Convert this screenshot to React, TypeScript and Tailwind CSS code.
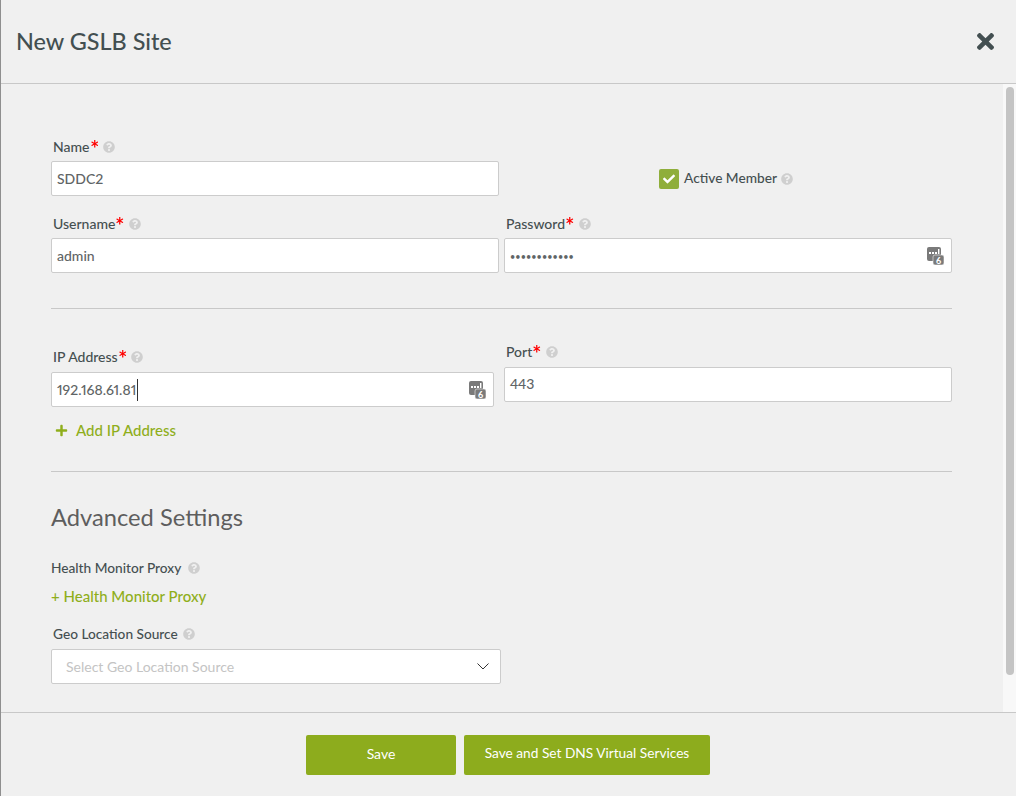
import React from "react";
import { FaQuestionCircle, FaTimes, FaPlus, FaCheck, FaAsterisk } from "react-icons/fa";

function Help({ className = "" }: { className?: string }) {
  return <FaQuestionCircle className={`text-[#cfcfcf] w-3 h-3 shrink-0 ${className}`} />;
}

function Label({ text }: { text: string }) {
  return (
    <div className="flex items-center h-[20px] pb-[2px] text-[14px] text-[#454f50] font-medium pl-[2px]">
      <span>{text}</span>
      <FaAsterisk className="text-[#ff0000] w-[7.5px] h-[7.5px] -mt-[4px] ml-[1px] shrink-0" />
      <Help className="ml-[5px] mt-[2px]" />
    </div>
  );
}

function SecretIcon() {
  return (
    <svg viewBox="0 0 17 18" className="w-[17px] h-[18px] shrink-0">
      <rect x="0" y="0" width="14" height="14" rx="2" fill="#7a7a7a" />
      <rect x="2" y="5" width="2" height="2" fill="#fff" />
      <rect x="5" y="5" width="2" height="2" fill="#fff" />
      <rect x="8" y="5" width="2" height="2" fill="#fff" />
      <rect x="11" y="2" width="1.4" height="5" fill="#fff" />
      <rect x="6" y="8" width="11" height="10" rx="2" fill="#7a7a7a" stroke="#f4f4f4" strokeWidth="0.6" />
      <text x="11.5" y="16.5" textAnchor="middle" fontSize="9" fontWeight="700" fill="#fff" fontFamily="Lato, sans-serif">6</text>
    </svg>
  );
}

function Box({ children, className = "" }: { children: React.ReactNode; className?: string }) {
  return (
    <div
      className={`h-[35px] bg-white border border-[#cccccc] rounded-[2px] flex items-center pl-[5px] pr-[7px] text-[14px] text-[#5f6566] font-medium ${className}`}
    >
      {children}
    </div>
  );
}

export default function App() {
  return (
    <div
      className="w-[1016px] h-[796px] overflow-hidden flex flex-col bg-[#f0f0f0] border-l border-l-[#8f8f8f]"
      style={{ fontFamily: '"Lato", "Open Sans", sans-serif' }}
    >
      <header className="h-[84px] shrink-0 border-b border-[#c8c8c8] flex items-center justify-between pl-[15px] pr-[22px]">
        <h1 className="text-[23.4px] font-medium text-[#434f51] leading-none">New GSLB Site</h1>
        <FaTimes className="text-[#434f51] w-[17px] h-[25px]" />
      </header>

      <div className="flex-1 flex min-h-0">
        <main className="flex-1 min-w-0 pl-[50px] pr-[51px] pt-[53px]">
          <div className="flex gap-[5px]">
            <div className="w-[448px] shrink-0">
              <Label text="Name" />
              <Box className="mt-[4px]">SDDC2</Box>
            </div>
            <div className="flex-1 min-w-0 flex items-center pl-[155px] pt-[24px]">
              <div className="w-5 h-5 bg-[#8fae3b] rounded-[2px] flex items-center justify-center">
                <FaCheck className="text-white w-3 h-3" />
              </div>
              <span className="ml-[5px] text-[13.7px] font-medium text-[#454f50]">Active Member</span>
              <Help className="ml-[4px]" />
            </div>
          </div>

          <div className="flex gap-[5px] mt-[18px]">
            <div className="w-[448px] shrink-0">
              <Label text="Username" />
              <Box className="mt-[4px]">admin</Box>
            </div>
            <div className="flex-1 min-w-0">
              <Label text="Password" />
              <Box className="mt-[4px] justify-between">
                <span className="text-[9px] tracking-[0.1px] pt-[2px]">••••••••••••</span>
                <SecretIcon />
              </Box>
            </div>
          </div>

          <div className="border-t border-[#c8c8c8] mt-[35px]" />

          <div className="flex gap-[10px] mt-[33px]">
            <div className="w-[443px] shrink-0 pt-[5px]">
              <Label text="IP Address" />
              <Box className="mt-[5px] justify-between">
                <span className="border-r border-[#333333] pr-[1px] leading-[22px] proportional-nums">192.168.61.81</span>
                <SecretIcon />
              </Box>
              <div className="flex items-center mt-[13px] ml-[4px] text-[15px] text-[#8fae1b] font-medium h-[20px]">
                <FaPlus className="w-[13px] h-[13px]" />
                <span className="ml-[8px]">Add IP Address</span>
              </div>
            </div>
            <div className="flex-1 min-w-0">
              <Label text="Port" />
              <Box className="mt-[5px] pb-[2px]">443</Box>
            </div>
          </div>

          <div className="border-t border-[#c8c8c8] mt-[31px]" />

          <h2 className="text-[23.7px] font-normal text-[#5e5e5e] leading-[30px] mt-[30px]">Advanced Settings</h2>

          <div className="flex items-center h-[20px] mt-[26px] text-[13.7px] font-medium text-[#454f50]">
            <span>Health Monitor Proxy</span>
            <Help className="ml-[7px]" />
          </div>
          <div className="h-[20px] mt-[8px] text-[15px] leading-[20px] font-medium text-[#8fae1b]">+ Health Monitor Proxy</div>
          <div className="mt-[18px]">
            <div className="flex items-center h-[20px] text-[13.7px] font-medium text-[#454f50] pl-[2px]">
              <span>Geo Location Source</span>
              <Help className="ml-[5px]" />
            </div>
            <Box className="mt-[5px] w-[450px] justify-between pl-[14px] pr-[11px]">
              <span className="text-[#c4c4c4] font-normal">Select Geo Location Source</span>
              <svg viewBox="0 0 12 7" className="w-[12px] h-[7px]">
                <path d="M0.5 0.5 L6 6 L11.5 0.5" fill="none" stroke="#333" strokeWidth="1" />
              </svg>
            </Box>
          </div>
        </main>
        <div className="w-[13px] shrink-0 bg-[#f8f8f8] flex justify-center pt-[3px] pb-[37px] pl-[1px]">
          <div className="w-[8px] h-full bg-[#c4c4c4] rounded-full" />
        </div>
      </div>

      <footer className="h-[84px] shrink-0 border-t border-[#c8c8c8] flex justify-center gap-[8px] pt-[22px] pr-[1px]">
        <button className="w-[150px] h-[40px] pb-[3px] bg-[#8dac1d] rounded-[2px] text-white text-[14px] font-normal">Save</button>
        <button className="w-[246px] h-[40px] pb-[3px] bg-[#8dac1d] rounded-[2px] text-white text-[13.7px] font-normal">
          Save and Set DNS Virtual Services
        </button>
      </footer>
    </div>
  );
}
